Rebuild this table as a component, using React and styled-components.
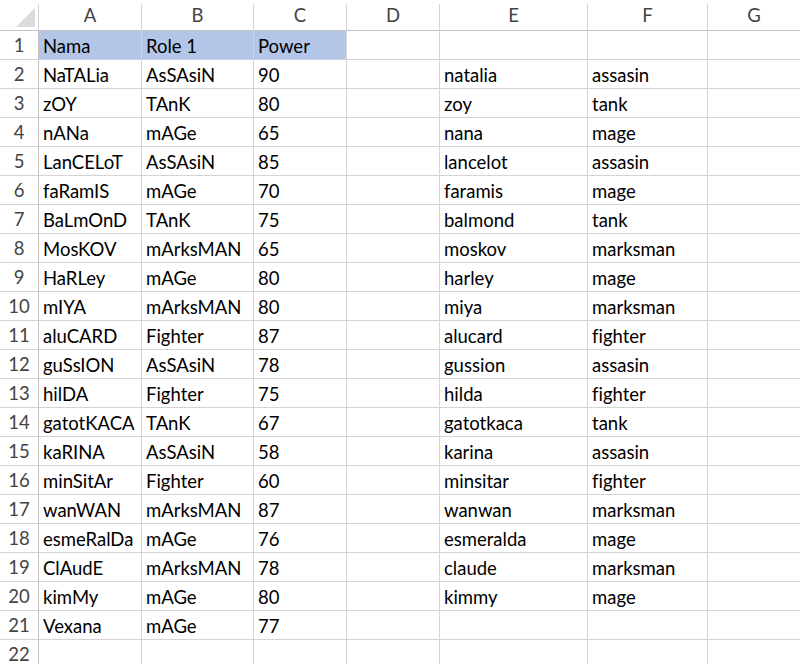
import React from "react";
import styled, { createGlobalStyle } from "styled-components";

const Global = createGlobalStyle`
  html, body { margin: 0; padding: 0; background: #fff; }
  body { font-family: "Lato", "Open Sans", sans-serif; font-variant-ligatures: none; }
`;

const COLS = "39px 103px 112px 93px 93px 148px 120px 1fr";

const Sheet = styled.div`
  width: 800px;
  height: 664px;
  overflow: hidden;
  background: #fff;
  display: flex;
  flex-direction: column;
`;

const HeaderRow = styled.div`
  display: grid;
  grid-template-columns: ${COLS};
  height: 31px;
  flex: none;
  border-bottom: 1px solid #c4c4c4;
  box-sizing: border-box;
`;

const Corner = styled.div`
  position: relative;
  border-right: 1px solid #d4d4d4;
  margin-top: 4px;
  box-sizing: border-box;
`;

const CornerTri = styled.svg`
  position: absolute;
  left: 16px;
  top: 4px;
`;

const ColHead = styled.div`
  margin-top: 4px;
  border-right: ${(p) => (p.$last ? "none" : "1px solid #d4d4d4")};
  box-sizing: border-box;
  display: flex;
  align-items: center;
  justify-content: center;
  font-family: "Lato", "Open Sans", sans-serif;
  font-size: 18.5px;
  color: #444;
  padding-bottom: 5px;
`;

const Row = styled.div`
  display: grid;
  grid-template-columns: ${COLS};
  height: 29px;
  flex: none;
`;

const RowHead = styled.div`
  border-right: 1px solid #c4c4c4;
  border-bottom: 1px solid #d4d4d4;
  box-sizing: border-box;
  display: flex;
  align-items: center;
  justify-content: center;
  font-size: 18.5px;
  color: #444;
`;

const Cell = styled.div`
  border-right: ${(p) => (p.$last ? "none" : "1px solid #d4d4d4")};
  border-bottom: 1px solid ${(p) => (p.$hl ? "#c8d2e6" : "#d4d4d4")};
  background: ${(p) => (p.$hl ? "#b4c6e7" : "#fff")};
  box-sizing: border-box;
  display: flex;
  align-items: center;
  padding-left: 4px;
  padding-top: 1px;
  font-size: 18.5px;
  color: #000;
  white-space: nowrap;
  font-variant-ligatures: none;
`;

const left = [
  ["Nama", "Role 1", "Power"],
  ["NaTALia", "AsSAsiN", "90"],
  ["zOY", "TAnK", "80"],
  ["nANa", "mAGe", "65"],
  ["LanCELoT", "AsSAsiN", "85"],
  ["faRamIS", "mAGe", "70"],
  ["BaLmOnD", "TAnK", "75"],
  ["MosKOV", "mArksMAN", "65"],
  ["HaRLey", "mAGe", "80"],
  ["mIYA", "mArksMAN", "80"],
  ["aluCARD", "Fighter", "87"],
  ["guSsION", "AsSAsiN", "78"],
  ["hilDA", "Fighter", "75"],
  ["gatotKACA", "TAnK", "67"],
  ["kaRINA", "AsSAsiN", "58"],
  ["minSitAr", "Fighter", "60"],
  ["wanWAN", "mArksMAN", "87"],
  ["esmeRalDa", "mAGe", "76"],
  ["ClAudE", "mArksMAN", "78"],
  ["kimMy", "mAGe", "80"],
  ["Vexana", "mAGe", "77"],
  ["", "", ""],
];

const right = [
  ["", ""],
  ["natalia", "assasin"],
  ["zoy", "tank"],
  ["nana", "mage"],
  ["lancelot", "assasin"],
  ["faramis", "mage"],
  ["balmond", "tank"],
  ["moskov", "marksman"],
  ["harley", "mage"],
  ["miya", "marksman"],
  ["alucard", "fighter"],
  ["gussion", "assasin"],
  ["hilda", "fighter"],
  ["gatotkaca", "tank"],
  ["karina", "assasin"],
  ["minsitar", "fighter"],
  ["wanwan", "marksman"],
  ["esmeralda", "mage"],
  ["claude", "marksman"],
  ["kimmy", "mage"],
  ["", ""],
  ["", ""],
];

const letters = ["A", "B", "C", "D", "E", "F", "G"];

export default function App() {
  return (
    <Sheet>
      <Global />
      <HeaderRow>
        <Corner>
          <CornerTri width="20" height="20" viewBox="0 0 20 20">
            <polygon points="0,19 19,19 19,0" fill="#dcdcdc" />
          </CornerTri>
        </Corner>
        {letters.map((l, i) => (
          <ColHead key={l} $last={i === letters.length - 1}>
            {l}
          </ColHead>
        ))}
      </HeaderRow>
      {left.map((r, i) => (
        <Row key={i}>
          <RowHead>{i + 1}</RowHead>
          <Cell $hl={i === 0}>{r[0]}</Cell>
          <Cell $hl={i === 0}>{r[1]}</Cell>
          <Cell $hl={i === 0}>{r[2]}</Cell>
          <Cell />
          <Cell>{right[i][0]}</Cell>
          <Cell>{right[i][1]}</Cell>
          <Cell $last />
        </Row>
      ))}
    </Sheet>
  );
}
